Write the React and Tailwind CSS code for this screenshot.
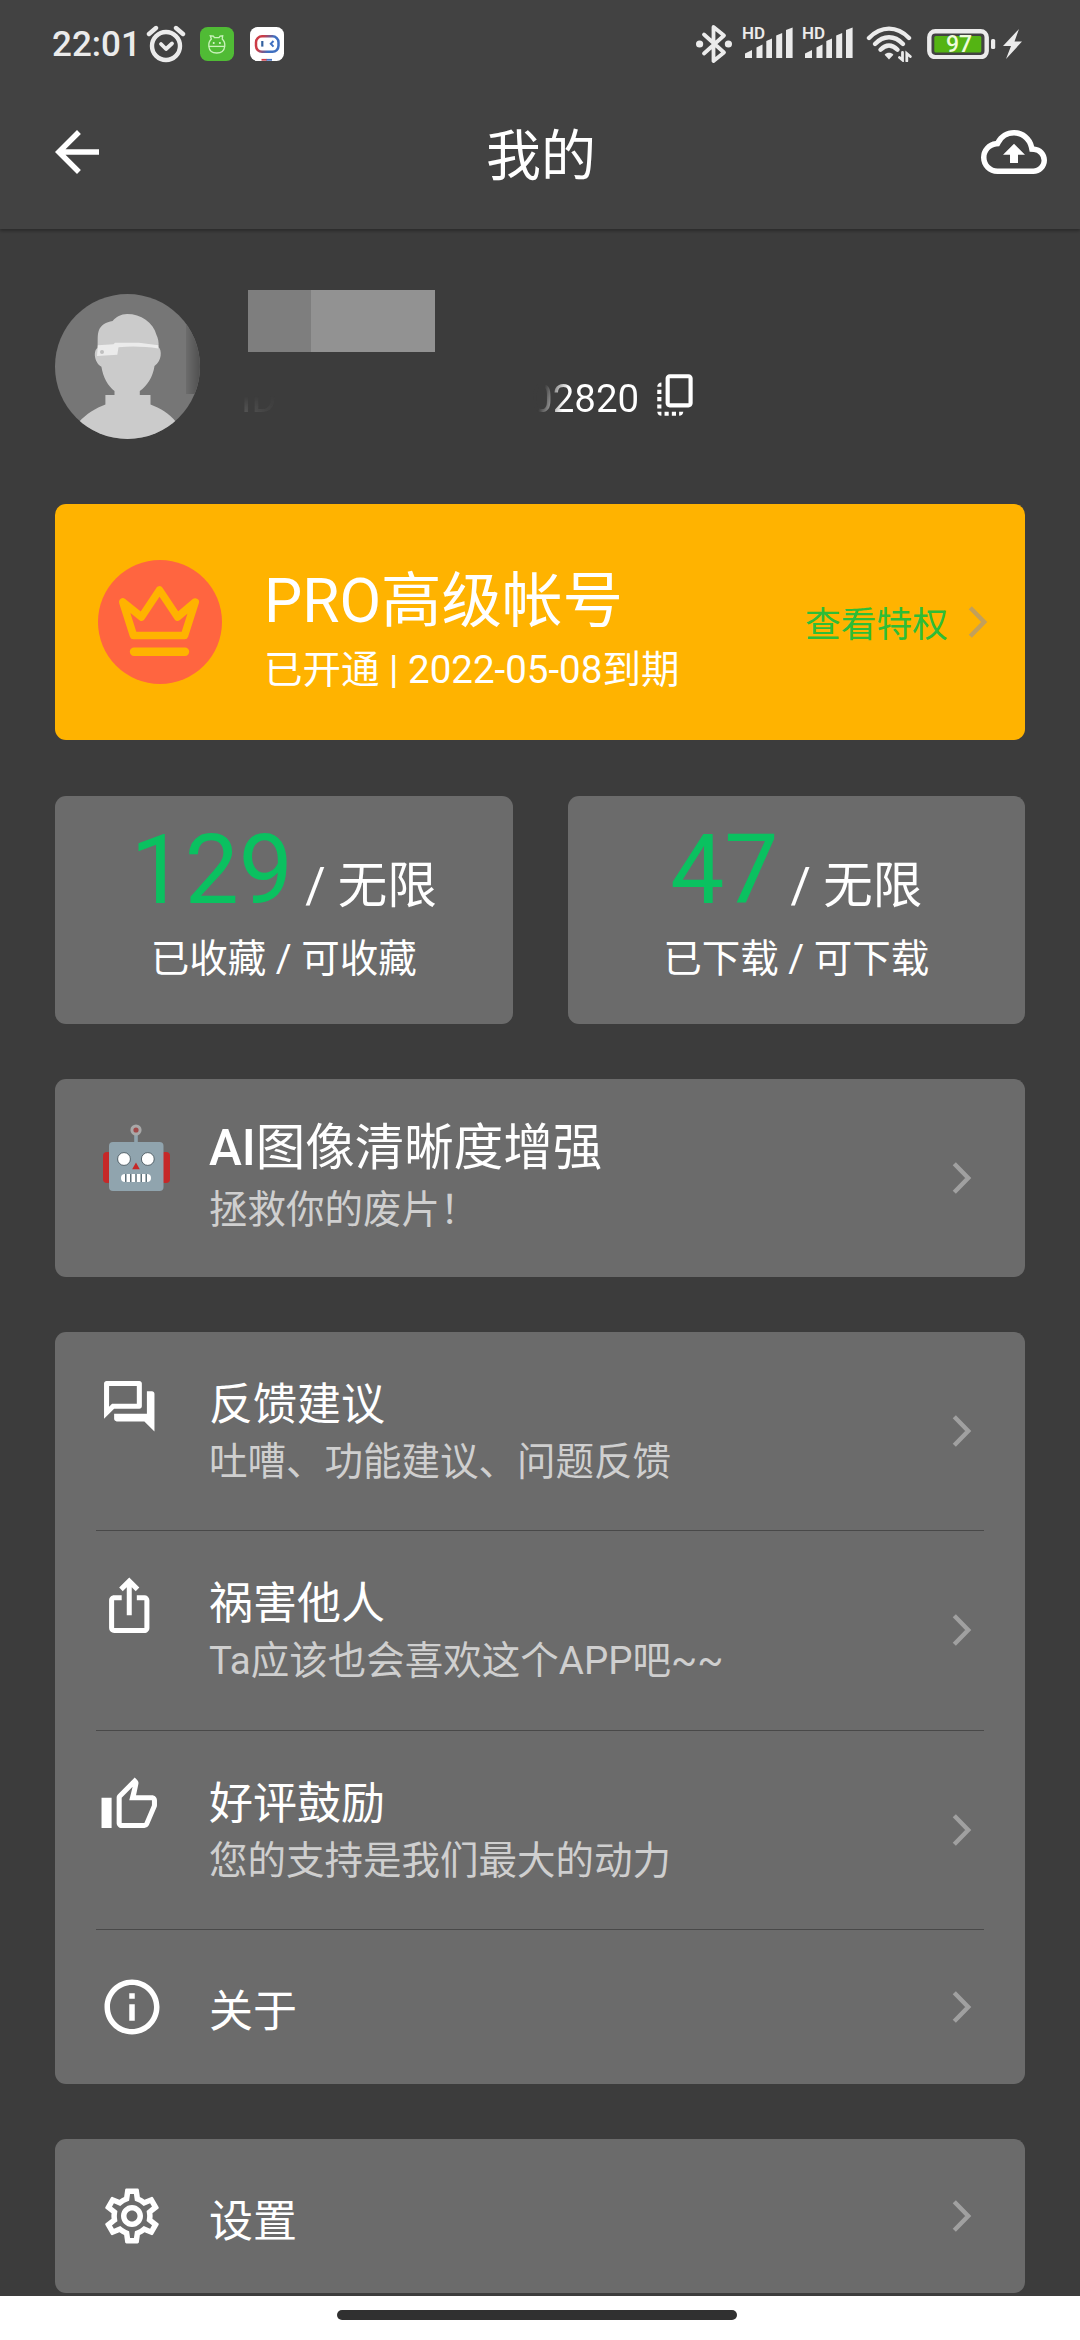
import React from 'react';
import {
  MdArrowBack,
  MdOutlineBackup,
  MdOutlineCopyAll,
  MdOutlineQuestionAnswer,
  MdIosShare,
  MdOutlineThumbUp,
  MdInfoOutline,
  MdOutlineSettings
} from 'react-icons/md';

const menuItems = [
  { id: 'feedback', icon: MdOutlineQuestionAnswer, title: '反馈建议', desc: '吐嘈、功能建议、问题反馈' },
  { id: 'share', icon: MdIosShare, title: '祸害他人', desc: 'Ta应该也会喜欢这个APP吧~~' },
  { id: 'rate', icon: MdOutlineThumbUp, title: '好评鼓励', desc: '您的支持是我们最大的动力' },
];

const stats = [
  { id: 'fav', count: 129, label: '已收藏 / 可收藏' },
  { id: 'download', count: 47, label: '已下载 / 可下载' },
];

function Chevron({ className }) {
  return (
    <svg className={className} width="20" height="34" viewBox="0 0 20 34" fill="none" stroke="currentColor" strokeWidth="4.4">
      <path d="M2.3 2.8 L16.2 17 L2.3 31.2" />
    </svg>
  );
}

function AlarmIcon() {
  return (
    <svg className="ml-[5px]" width="40" height="38" viewBox="0 0 40 38" fill="none" stroke="#ebebeb" strokeLinecap="round">
      <circle cx="20" cy="21" r="14" strokeWidth="4.4" />
      <path d="M3 9 L10 3 M37 9 L30 3" strokeWidth="4.4" />
      <path d="M15 19 L20 24 L26 18.5" strokeWidth="3.8" strokeLinejoin="round" />
    </svg>
  );
}

function GreenAppIcon() {
  return (
    <svg className="ml-[14px]" width="34" height="34" viewBox="0 0 33 34" preserveAspectRatio="none">
      <rect width="33" height="34" rx="7.5" fill="#50bb35" />
      <g fill="none" stroke="#c9f2bb" strokeWidth="1.3">
        <path d="M11 12 L10 8.8 L13 9.2 L14 10.6 H18.5 L19.5 9.2 L22 8.8 L21.6 12 C23.6 14 24.3 17 24 19.5 C23.5 23.5 20.5 26 16.3 26 C12 26 9 23.5 8.6 19.5 C8.3 17 9 14 11 12 Z" />
        <path d="M8.6 19.4 H24" />
      </g>
      <circle cx="13.3" cy="16" r="1" fill="#dcf7d2" />
      <circle cx="19.3" cy="16" r="1" fill="#dcf7d2" />
    </svg>
  );
}

function WhiteAppIcon() {
  return (
    <svg className="ml-[16px]" width="34" height="34" viewBox="0 0 34 34">
      <defs>
        <linearGradient id="ring" x1="0" y1="0" x2="1" y2="0.3">
          <stop offset="0.3" stopColor="#cc3b46" />
          <stop offset="0.75" stopColor="#3f6fc0" />
        </linearGradient>
      </defs>
      <rect width="34" height="34" rx="7.5" fill="#fff" />
      <rect x="6" y="9.3" width="22.5" height="15.5" rx="6" fill="none" stroke="url(#ring)" strokeWidth="2.5" />
      <path d="M12.3 14 V19.6" stroke="#33619f" strokeWidth="2.2" />
      <path d="M23.5 14 L20.8 16.8 L23.5 19.6" fill="none" stroke="#3f6fc0" strokeWidth="2" />
      <path d="M11.5 32.8 H17" stroke="#cc3b46" strokeWidth="1.8" />
      <path d="M16.5 32.8 H22" stroke="#3f6fc0" strokeWidth="1.8" />
    </svg>
  );
}

function BluetoothIcon() {
  return (
    <svg width="36" height="40" viewBox="0 0 36 40" fill="none" stroke="#ebebeb" strokeWidth="3.8" strokeLinejoin="round" strokeLinecap="round">
      <path d="M8 10.5 L28 28.5 L17.5 37 V3 L28 11.5 L8 29.5" />
      <circle cx="3.6" cy="20" r="3.6" fill="#ebebeb" stroke="none" />
      <circle cx="32.4" cy="20" r="3.6" fill="#ebebeb" stroke="none" />
    </svg>
  );
}

function SignalIcon() {
  return (
    <div className="relative h-[36px] w-[52px]">
      <svg width="52" height="36" viewBox="0 0 52 36" fill="#ebebeb">
        <path d="M3 27.5 L10 24 V32 H3 Z" />
        <path d="M14.5 21.5 L20.5 18.5 V32 H14.5 Z" />
        <path d="M24.3 15 L30 12.5 V32 H24.3 Z" />
        <path d="M34.2 9.5 L40.2 7 V32 H34.2 Z" />
        <path d="M44 4 L50.6 1.5 V32 H44 Z" />
      </svg>
      <span className="absolute left-0 top-[-2px] text-[17px] font-semibold leading-[18px] text-[#ebebeb]">HD</span>
    </div>
  );
}

function WifiIcon() {
  return (
    <svg className="ml-[12px]" width="48" height="36" viewBox="0 0 48 36" fill="none" stroke="#ebebeb" strokeWidth="4.4" strokeLinecap="round">
      <path d="M3 12 C15 -0.5 31 -0.5 43 12" />
      <path d="M9 18 C17.5 9 28.5 9 37 18" />
      <path d="M14.5 23.7 C20 18 26 18 31.5 23.7" />
      <path d="M23 33.5 L18.6 28.8 C21 26.2 25 26.2 27.4 28.8 Z" fill="#ebebeb" stroke="none" />
      <path d="M36.5 26.5 V34 L33.5 31.5 M40.8 35 V27.5 L44.3 30.5" strokeWidth="2.8" />
    </svg>
  );
}

function BatteryIcon() {
  return (
    <div className="relative ml-[13px] h-[30px] w-[69px]">
      <svg width="69" height="30" viewBox="0 0 69 30">
        <rect x="2.3" y="2.3" width="57.4" height="25.8" rx="6" fill="none" stroke="#ebebeb" strokeWidth="4.4" />
        <rect x="7.3" y="7" width="47" height="16.5" rx="1.5" fill="#54b413" />
        <rect x="64" y="10" width="4.2" height="10" rx="1.6" fill="#ebebeb" />
      </svg>
      <span className="absolute left-[19px] top-[3px] text-[23px] font-medium leading-[25px] text-[#eefbdc]">97</span>
    </div>
  );
}

function StatusBar() {
  return (
    <div className="flex h-[75px] items-center pl-[52px] pr-[57px] pt-[13px]">
      <div className="flex flex-1 items-center pb-[1px]">
        <span className="pt-[2px] text-[35px] font-medium leading-[40px] text-[#ebebeb]">22:01</span>
        <AlarmIcon />
        <GreenAppIcon />
        <WhiteAppIcon />
      </div>
      <div className="flex items-center">
        <BluetoothIcon />
        <div className="ml-[10px] flex gap-[8px]">
          <SignalIcon />
          <SignalIcon />
        </div>
        <WifiIcon />
        <BatteryIcon />
        <svg className="ml-[7px]" width="20" height="30" viewBox="0 0 20 30" fill="#ebebeb">
          <path d="M16 0 L0 17 H8 L3 30 L19 12.5 H11.5 Z" />
        </svg>
      </div>
    </div>
  );
}

function Avatar() {
  return (
    <svg width="145" height="145" viewBox="0 0 145 145">
      <defs>
        <clipPath id="round">
          <circle cx="72.5" cy="72.5" r="72.5" />
        </clipPath>
        <linearGradient id="edge" x1="0" y1="0" x2="1" y2="0">
          <stop offset="0" stopColor="#6c6c6c" />
          <stop offset="1" stopColor="#505050" />
        </linearGradient>
      </defs>
      <g clipPath="url(#round)">
        <rect width="145" height="145" fill="#767676" />
        <rect x="131" y="0" width="14" height="100" fill="url(#edge)" />
        <path
          d="M72 20 C66 20 61 23 57.6 27 C51 28 46 31 44 36 C42 41 43 47 42.5 54 C38.5 56 38.5 68 46.4 72.7 C48 83 53 92 59.5 97 V101 H50.4 V110.5 C41 114 31 120 24 128 V145 H121 V128 C114 119 105 114 95.5 110.5 V101 H84.8 V97 C92 92 98 83 99.5 72 C107 67 107 56 103.5 53 C104 48 103 44 101.5 41 C98 28 86 20 72 20 Z"
          fill="#cbcbcb"
        />
        <path d="M42.9 51.3 L58.5 50.3 L60 48.8 H84 L103.3 51.3 V54.4 C90 52.5 76 51.8 63.5 53.3 L62.3 60.8 L42 62 Z" fill="#ebebeb" />
        <circle cx="47" cy="58" r="2" fill="#c0c0c0" />
      </g>
    </svg>
  );
}

function CrownBadge() {
  return (
    <svg width="124" height="124" viewBox="0 0 124 124" fill="none">
      <circle cx="62" cy="62" r="62" fill="#ff6540" />
      <g stroke="#ffb300" strokeWidth="7.6" strokeLinecap="round" strokeLinejoin="round">
        <path d="M24.8 42 L35.5 75.5 H86.5 L97.2 42 L79.5 57 L61.5 30 L43.5 57 Z" />
        <path d="M36 91.8 H87" strokeWidth="8.4" />
      </g>
    </svg>
  );
}

function Robot() {
  return (
    <svg width="67" height="68" viewBox="0 0 67 68">
      <path d="M33 9 V20" stroke="#90a4ae" strokeWidth="3.6" />
      <circle cx="33" cy="6" r="4.1" fill="#a04a4a" stroke="#a8a8a8" strokeWidth="3" />
      <rect x="0" y="28" width="9" height="31" rx="4" fill="#c62828" />
      <rect x="58" y="28" width="9" height="31" rx="4" fill="#c62828" />
      <rect x="6" y="18" width="54.5" height="49" rx="4" fill="#90a4ae" />
      <circle cx="21" cy="35" r="6.4" fill="#fff" stroke="#39474f" strokeWidth="0.8" />
      <circle cx="44.8" cy="35" r="6.4" fill="#fff" stroke="#39474f" strokeWidth="0.8" />
      <path d="M33 38.5 L36.8 45.3 H29.2 Z" fill="#c62828" />
      <rect x="18" y="50" width="30" height="8" rx="4" fill="#fff" />
      <path d="M22.8 50 V58 M27.8 50 V58 M33 50 V58 M38.2 50 V58 M43.2 50 V58" stroke="#455a64" strokeWidth="1.3" />
    </svg>
  );
}

function MenuRow({ item }) {
  const Icon = item.icon;
  return (
    <div className="flex flex-1">
      <Icon className="mt-[44px] size-[60.5px] shrink-0 text-white" />
      <div className="ml-[49.5px] flex-1 pt-[44px]">
        <div className="text-[44px] leading-[58px] text-white">{item.title}</div>
        <div className="text-[38.5px] leading-[56px] text-[#cfcfcf]">{item.desc}</div>
      </div>
      <Chevron className="self-center text-[#a0a0a0]" />
    </div>
  );
}

function SingleRow({ icon: Icon, title }) {
  return (
    <div className="flex h-[154px] items-center">
      <Icon className="size-[66px] shrink-0 text-white" />
      <div className="ml-[44px] flex-1 pt-[11px] text-[44px] leading-[58px] text-white">{title}</div>
      <Chevron className="text-[#a0a0a0]" />
    </div>
  );
}

function App() {
  return (
    <main className="flex h-[2340px] w-[1080px] flex-col overflow-hidden bg-[#3c3c3c] font-['Roboto','Noto_Sans_CJK_SC',sans-serif]">
      {/* Status bar + app bar */}
      <header className="h-[229px] shrink-0 bg-[#424242] shadow-[0_2px_3px_rgba(0,0,0,0.3)]">
        <StatusBar />
        <div className="flex h-[154px] items-center justify-between pl-[44px] pr-[33px]">
          <MdArrowBack className="size-[66px] text-white" />
          <h1 className="mr-[9px] pt-[7px] text-[55px] leading-[70px] text-white">我的</h1>
          <MdOutlineBackup className="size-[66px] text-white" />
        </div>
      </header>

      <div className="flex flex-1 flex-col px-[55px]">
        {/* Profile */}
        <section className="flex h-[275px] pt-[61px]">
          <div className="mt-[4px]">
            <Avatar />
          </div>
          <div className="ml-[48px]">
            <div className="flex h-[62px] w-[187px]">
              <div className="w-[63px] bg-[#7e7e7e]" />
              <div className="flex-1 bg-[#929292]" />
            </div>
            <div className="mt-[18px] flex h-[50px] items-center">
              <div className="ml-[-7px] mt-[7px] w-[290px]">
                <span className="bg-linear-to-br from-[#606060] from-20% to-[#3c3c3c] to-90% bg-clip-text text-[38.5px] leading-[50px] text-transparent [mask-image:linear-gradient(to_bottom,transparent_45%,black_80%)]">ID</span>
              </div>
              <span className="mt-[7px] bg-[linear-gradient(105deg,#3c3c3c_14%,#ffffff_34%)] bg-clip-text text-[38.5px] leading-[50px] text-transparent">02820</span>
              <MdOutlineCopyAll className="ml-[12px] size-[50px] text-white" />
            </div>
          </div>
        </section>

        {/* Pro membership */}
        <section className="flex h-[236px] rounded-[11px] bg-[#ffb300] pl-[43px] pr-[37px]">
          <div className="mt-[56px]">
            <CrownBadge />
          </div>
          <div className="ml-[42px] flex-1 pt-[59px]">
            <div className="text-[60.5px] leading-[78px] text-white">PRO高级帐号</div>
            <div className="text-[38.5px] leading-[58px] text-white">已开通 | 2022-05-08到期</div>
          </div>
          <div className="flex items-center gap-[20px]">
            <span className="pt-[6px] text-[35.75px] leading-[48px] text-[#2ebd37]">查看特权</span>
            <Chevron className="text-[#c3a05a]" />
          </div>
        </section>

        {/* Usage counters */}
        <section className="mt-[56px] grid grid-cols-2 gap-[55px] text-center">
          {stats.map((s) => (
            <div key={s.id} className="h-[228px] rounded-[11px] bg-[#6b6b6b] pt-[24px]">
              <div className="text-[96.25px] leading-[100px] text-[#0ac160]">
                {s.count}
                <span className="text-[49.5px] leading-none text-white"> / 无限</span>
              </div>
              <div className="mt-[9px] text-[38.5px] leading-[60px] text-white">{s.label}</div>
            </div>
          ))}
        </section>

        {/* AI enhance */}
        <section className="mt-[55px] flex h-[198px] rounded-[11px] bg-[#6b6b6b] pl-[48px] pr-[53px]">
          <div className="mt-[45px]">
            <Robot />
          </div>
          <div className="ml-[39px] flex-1 pt-[37px]">
            <div className="text-[49.5px] leading-[64px] text-white"><span className="font-medium">AI</span>图像清晰度增强</div>
            <div className="text-[38.5px] leading-[60px] text-[#cfcfcf]">拯救你的废片！</div>
          </div>
          <Chevron className="self-center text-[#a0a0a0]" />
        </section>

        {/* Menu list */}
        <section className="mt-[55px] h-[752px] rounded-[11px] bg-[#6b6b6b] pl-[44px] pr-[53px]">
          {menuItems.map((item) => (
            <div key={item.id} className="flex h-[199.3px] flex-col">
              <MenuRow item={item} />
              <div className="ml-[-3px] mr-[-12px] h-px bg-[#494949]" />
            </div>
          ))}
          <SingleRow icon={MdInfoOutline} title="关于" />
        </section>

        <section className="mt-[55px] rounded-[11px] bg-[#6b6b6b] pl-[44px] pr-[53px]">
          <SingleRow icon={MdOutlineSettings} title="设置" />
        </section>
      </div>

      {/* Gesture bar */}
      <footer className="flex h-[44px] shrink-0 justify-center bg-white pt-[14px]">
        <div className="ml-[-7px] h-[10px] w-[400px] rounded-full bg-[#303030]" />
      </footer>
    </main>
  );
}

export default App;
